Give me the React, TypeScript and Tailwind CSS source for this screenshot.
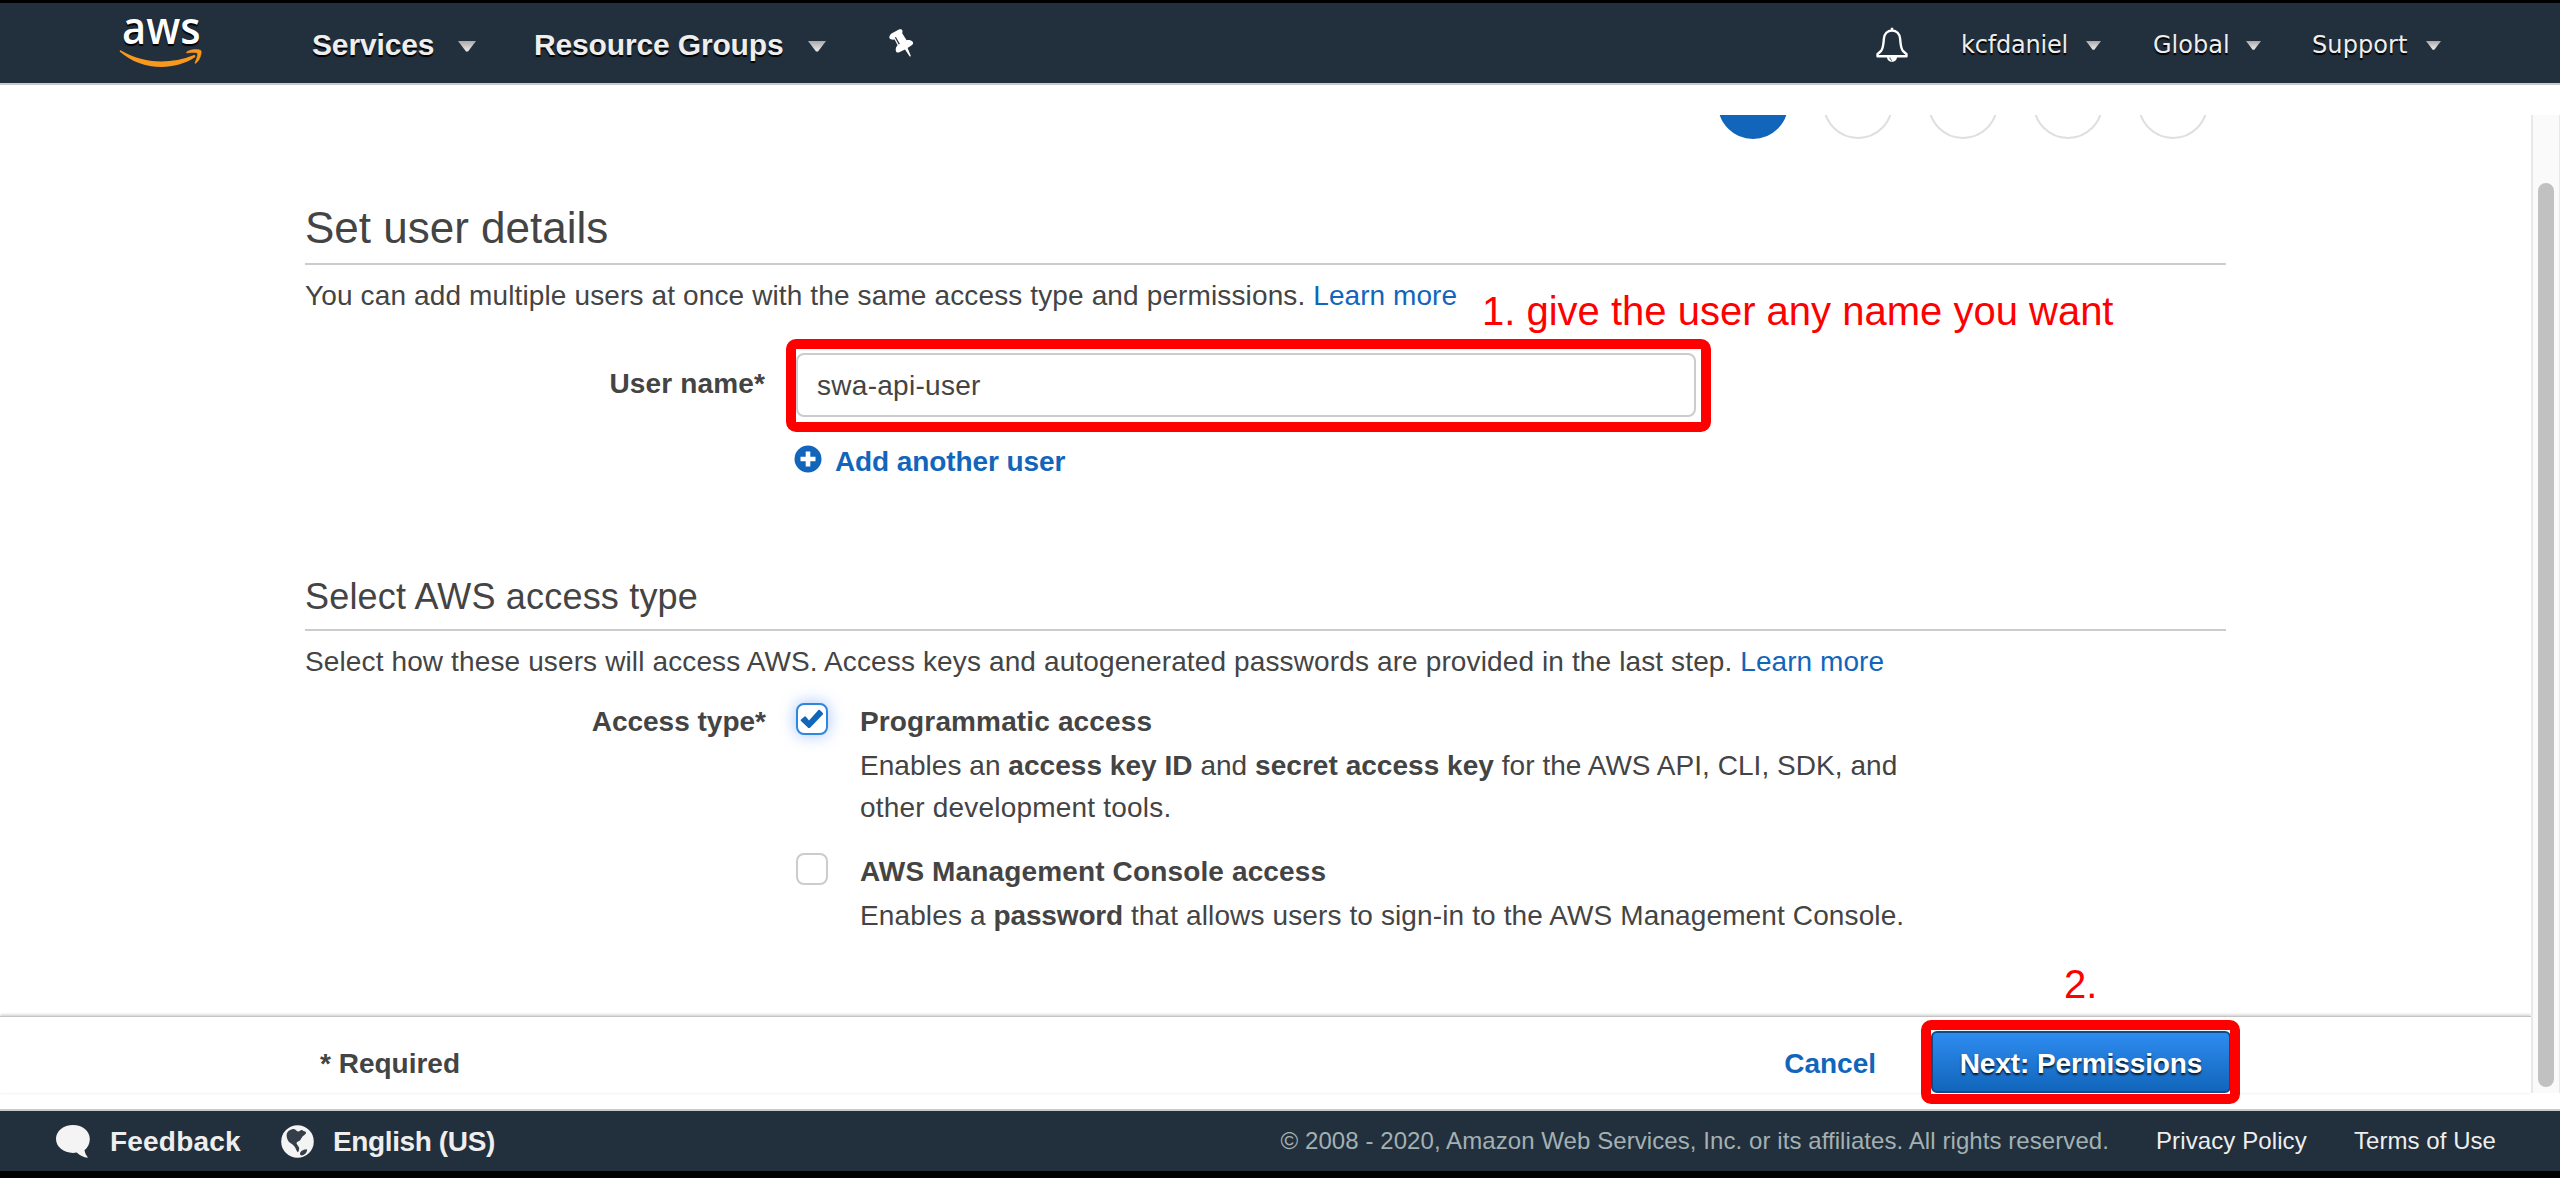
import React from "react";

function Caret({ className, small }: { className: string; small?: boolean }) {
  return (
    <svg
      className={className}
      width={small ? 15 : 18}
      height={small ? 9 : 11}
      viewBox="0 0 18 10"
      preserveAspectRatio="none"
    >
      <defs>
        <linearGradient id="caret" x1="0" y1="0" x2="0" y2="1">
          <stop offset="0" stopColor="#a9a9a9" />
          <stop offset="1" stopColor="#ededed" />
        </linearGradient>
      </defs>
      <path d="M0 0H18L10 9.6H8Z" fill="url(#caret)" />
    </svg>
  );
}

function AwsLogo() {
  return (
    <svg width="90" height="60" viewBox="0 0 90 60" className="ml-[116px] mt-[10px] shrink-0 overflow-visible">
      <text
        x="6"
        y="30.7"
        fill="#fff"
        fontFamily="Open Sans"
        fontWeight="600"
        fontSize="45"
        textLength="78.500"
        lengthAdjust="spacingAndGlyphs"
      >
        aws
      </text>
      <g transform="translate(-0.200 0) scale(1.055 1)" fill="#f8981d">
        <path d="M4.5 37.2C16 44.4 29 48.4 43 48.4C53 48.4 64 46.3 73.6 42.2C75 41.6 76.3 43.2 75 44.2C66.400 50.500 54 53.900 43.300 53.900C28.300 53.900 14.500 48.300 4.200 38.900C3.400 38.100 3.700 36.800 4.500 37.200Z" />
        <path
          d="M77.3 40.300C76.200 38.900 70.300 39.600 67.600 39.900C66.800 40 66.700 39.300 67.400 38.800C72.100 35.500 79.800 36.500 80.700 37.600C81.600 38.700 80.500 46.400 76.100 50.100C75.400 50.700 74.800 50.400 75.100 49.600C76.100 47.200 78.400 41.700 77.300 40.300Z"
          stroke="#f8981d"
          strokeWidth="0.5"
        />
      </g>
    </svg>
  );
}

function Pin() {
  return (
    <svg width="26" height="30" viewBox="0 0 26 30" className="ml-[63px] mt-[25px] shrink-0">
      <path
        d="M0.500 8.300C0 9.500 0.500 10.800 1.800 11.300C3.200 11.900 4.600 11.800 5.600 11.600L8.600 17.300C7 19 6.500 20.800 6.800 22.500C7.100 24.400 8.300 25 9.800 24.400L16 21.400L20.700 28.600H21.600L21.700 27.600L18.600 20L22.700 17.300C24.200 16.200 24.500 14.800 23.600 13.700C22.300 12.200 20 11.700 17.600 12.200L13.200 5.200C13.800 3.900 13.600 2.500 12.700 1.600C11.800 0.900 10.900 1.100 9.900 1.500L2.500 5.500C1.500 6.200 0.900 7.200 0.500 8.300Z"
        fill="#fff"
      />
      <path d="M6.400 9.300L10.300 16.200" stroke="#222f3c" strokeWidth="1.300" />
    </svg>
  );
}

function Bell() {
  return (
    <svg width="32" height="36" viewBox="0 0 32 36" className="mt-[24px] shrink-0">
      <path
        d="M16 0.800V4M16 3.500C11.200 3.500 8.400 7 7.900 11.500C7.300 17.500 7.400 21.200 5 24L1.500 27.200V29.200H30.500V27.200L27 24C24.600 21.200 24.700 17.500 24.100 11.500C23.600 7 20.800 3.500 16 3.500Z"
        fill="none"
        stroke="#fff"
        strokeWidth="2.400"
        strokeLinejoin="round"
      />
      <path d="M11 30H21C21 33 18.800 34.800 16 34.800C13.200 34.800 11 33 11 30Z" fill="#fff" />
      <path d="M14 30.500C14 32 14.800 33 16 33.600" fill="none" stroke="#222f3c" strokeWidth="0.900" />
    </svg>
  );
}

function Header() {
  return (
    <header className="flex h-[82px] shrink-0 border-b-2 border-[#c9cacd] bg-[#222f3c] text-[#eee] [text-shadow:0_2px_1px_#000]">
      <AwsLogo />
      <div className="ml-[106px] w-[146px] shrink-0 whitespace-nowrap text-[30px] font-bold leading-[83px] tracking-[-0.15px]">
        Services
      </div>
      <Caret className="mt-[38px] shrink-0" />
      <div className="ml-[58px] w-[274px] shrink-0 whitespace-nowrap text-[30px] font-bold leading-[83px] tracking-[-0.15px]">
        Resource Groups
      </div>
      <Caret className="mt-[38px] shrink-0" />
      <Pin />
      <div className="ml-auto flex font-['DejaVu_Sans',sans-serif] text-[24px] leading-[84px] tracking-[-0.2px]">
        <Bell />
        <div className="ml-[53px] w-[125px] whitespace-nowrap">kcfdaniel</div>
        <Caret small className="mt-[38px]" />
        <div className="ml-[52px] w-[93px] whitespace-nowrap tracking-[0]">Global</div>
        <Caret small className="mt-[38px]" />
        <div className="ml-[51px] w-[114px] whitespace-nowrap tracking-[0.1px]">Support</div>
        <Caret small className="mr-[119px] mt-[38px]" />
      </div>
    </header>
  );
}

function Steps() {
  return (
    <div className="flex h-[24px] gap-[35px] overflow-hidden pl-[1718px] text-[32px] leading-[66px]">
      <div className="-mt-[46px] h-[70px] w-[70px] shrink-0 rounded-full border-2 border-[#1166bb] bg-[#1166bb] text-center text-white">
        1
      </div>
      {["2", "3", "4", "5"].map((n) => (
        <div
          key={n}
          className="-mt-[46px] h-[70px] w-[70px] shrink-0 rounded-full border-2 border-[#dfdfdf] text-center text-[#999]"
        >
          {n}
        </div>
      ))}
    </div>
  );
}

function Checkbox({ checked }: { checked?: boolean }) {
  return checked ? (
    <div className="mt-[3px] flex h-8 w-8 shrink-0 items-center justify-center rounded-lg border-2 border-[#2e86de] bg-white shadow-[0_0_16px_rgba(46,125,240,0.45)]">
      <svg width="24" height="20" viewBox="0 0 24 20">
        <path
          d="M1 10.600L4.500 7.600C5 7.300 5.500 7.300 6 7.800L9 11.400L18.200 1.200C18.700 0.700 19.300 0.700 19.800 1.100L22.800 3.900C23.200 4.400 23.200 4.900 22.800 5.400L10.300 18.500C9.500 19.300 8.500 19.300 7.800 18.500L1 12C0.500 11.500 0.500 11.100 1 10.600Z"
          fill="#1166bb"
        />
      </svg>
    </div>
  ) : (
    <div className="mt-[3px] h-8 w-8 shrink-0 rounded-lg border-2 border-[#ccc] bg-white" />
  );
}

function Details() {
  return (
    <main className="h-[901px] overflow-hidden">
      <Steps />
      <div className="ml-[305px] w-[1921px]">
        <h1 className="mt-[63px] border-b-2 border-[#ccc] pb-[9px] text-[44px] leading-[52px]">Set user details</h1>
        <p className="mt-[10px] whitespace-nowrap tracking-[0.13px]">
          You can add multiple users at once with the same access type and permissions.{" "}
          <a className="tracking-[0.05px] text-[#1166bb]">Learn more</a>
        </p>
        <div className="mt-[36px] flex">
          <div className="w-[460px] shrink-0 text-right font-bold leading-[61px] tracking-[0.15px]">User name*</div>
          <div className="relative ml-[31px] h-[64px] w-[900px] rounded-lg border-2 border-[#ccc] bg-white pl-[19px] leading-[61px] tracking-[0.28px]">
            swa-api-user
            <div className="pointer-events-none absolute -left-[12px] -top-[16px] h-[93px] w-[925px] rounded-[10px] border-[10px] border-[#f00]" />
          </div>
        </div>
        <div className="mt-[24px] flex pl-[489px] font-bold text-[#1166bb]">
          <svg width="28" height="28" viewBox="0 0 28 28" className="mt-[4px]">
            <circle cx="14" cy="14" r="13.500" fill="#1166bb" />
            <path d="M14 6.500V21.500M6.500 14H21.500" stroke="#fff" strokeWidth="4.600" />
          </svg>
          <span className="ml-[13px] tracking-[-0.1px]">Add another user</span>
        </div>

        <h2 className="mt-[92px] border-b-2 border-[#ccc] pb-[10px] text-[36px] leading-[44px] tracking-[0.19px]">
          Select AWS access type
        </h2>
        <p className="mt-[10px] whitespace-nowrap tracking-[0.125px]">
          Select how these users will access AWS. Access keys and autogenerated passwords are provided in the last
          step. <a className="tracking-[0.05px] text-[#1166bb]">Learn more</a>
        </p>
        <div className="mt-[17px] flex">
          <div className="w-[461px] shrink-0 text-right font-bold leading-[44px]">Access type*</div>
          <div className="ml-[30px] flex flex-col gap-[22px]">
            <div className="flex">
              <Checkbox checked />
              <div className="ml-[32px] whitespace-nowrap pt-px">
                <div className="mb-[2px] font-bold tracking-[0.14px]">Programmatic access</div>
                <div className="tracking-[0.04px]">
                  Enables an <b>access key ID</b> and <b>secret access key</b> for the AWS API, CLI, SDK, and
                  <br />
                  <span className="tracking-[0.2px]">other development tools.</span>
                </div>
              </div>
            </div>
            <div className="-mt-px flex">
              <Checkbox />
              <div className="ml-[32px] whitespace-nowrap pt-px">
                <div className="mb-[2px] font-bold tracking-[0.14px]">AWS Management Console access</div>
                <div className="tracking-[0.12px]">
                  Enables a <b className="tracking-[-0.15px]">password</b> that allows users to sign-in to the AWS
                  Management Console.
                </div>
              </div>
            </div>
          </div>
        </div>
      </div>
    </main>
  );
}

function ActionBar() {
  return (
    <div className="flex h-[77px] border-t border-[#c4c4c4] bg-white font-bold leading-[76px] shadow-[0_-1px_3px_rgba(0,0,0,0.22)]">
      <div className="ml-[320px] mt-[9px]">* Required</div>
      <div className="ml-auto mr-[55px] mt-[9px] text-[#1166bb]">Cancel</div>
      <div className="relative mr-[300px] mt-[14px] h-[62px] w-[300px] rounded-md border-2 border-[#0f4a8a] bg-linear-to-b from-[#2e8cf0] to-[#1166bb] text-center leading-[61px] tracking-[-0.1px] text-white [text-shadow:0_2px_2px_rgba(0,0,0,0.8)]">
        Next: Permissions
        <div className="pointer-events-none absolute -left-[12px] -top-[13px] h-[84px] w-[319px] rounded-[10px] border-[10px] border-[#f00]" />
      </div>
    </div>
  );
}

function Footer() {
  return (
    <footer className="flex h-[62px] shrink-0 border-t-2 border-[#c8cacc] bg-[#222f3c] text-[#eee]">
      <svg width="36" height="36" viewBox="0 0 36 36" className="ml-[55px] mt-[13px]">
        <path
          d="M18 1C27.500 1 34.800 7 34.800 15C34.800 19.500 33 23.500 29.500 26.200C30 29.500 31.500 31.500 33 33.700C28.500 33.300 24.500 31.500 21.800 28.500C20.500 28.800 19.300 28.900 18 28.900C8.500 28.900 1 22.700 1 15C1 7 8.500 1 18 1Z"
          fill="#f4f4f4"
        />
      </svg>
      <div className="ml-[19px] w-[170px] text-[28px] font-bold leading-[62px] tracking-[0.2px]">Feedback</div>
      <svg width="34" height="36" viewBox="0 0 34 36" className="mt-[13px]">
        <circle cx="17.500" cy="17.500" r="16.300" fill="#f4f4f4" />
        <path
          d="M7 9C9 5.800 12.500 4.800 14.500 5.200C16 5.500 16.500 7.500 18.500 7.500C19.800 7.300 20.500 5.500 22 6C23.500 7.500 25 7 26 8.200C26.500 9.800 24 11 22.500 12.500C21.500 14 20.800 15 20 16.500C18.800 17.500 17.200 17.300 16.500 19C16.500 20.500 18.300 21.500 19 23.500C19.500 25.500 18.800 27.500 17.800 28.300C16.500 27 16 25 15 23.200C13.500 20.500 10.500 19.500 8.800 17.800C7 15.500 6 11.500 7 9Z"
          fill="#343f4a"
        />
        <path d="M20 29.500C20.500 26.800 23.500 25.500 27 25.300C27.500 28 25 31 21.500 31.500C20.500 31.400 19.900 30.500 20 29.500Z" fill="#343f4a" />
      </svg>
      <div className="ml-[19px] whitespace-nowrap text-[28px] font-bold leading-[62px] tracking-[-0.38px]">
        English (US)
      </div>
      <div className="ml-auto flex whitespace-nowrap text-[24px] leading-[60px]">
        <div className="mr-[47px] tracking-[0.075px] text-[#a3b1b3]">
          © 2008 - 2020, Amazon Web Services, Inc. or its affiliates. All rights reserved.
        </div>
        <div className="w-[198px] tracking-[0.1px]">Privacy Policy</div>
        <div className="w-[206px] tracking-[0.05px]">Terms of Use</div>
      </div>
    </footer>
  );
}

export default function App() {
  return (
    <div className="relative flex h-[1178px] w-[2560px] flex-col overflow-hidden border-b-[7px] border-t-[3px] border-black bg-white font-['Liberation_Sans',Arial,sans-serif] text-[28px] leading-[42px] text-[#444]">
      <Header />
      <div className="flex flex-1 pb-[16px] pt-[30px]">
        <div className="flex w-[2531px] flex-col">
          <Details />
          <ActionBar />
        </div>
        <div className="w-[29px] border-l-2 border-r border-[#e8e8e8] bg-[#fafafa] pl-[5px] pt-[68px]">
          <div className="h-[904px] w-[16px] rounded-full bg-[#c1c1c1]" />
        </div>
      </div>
      <Footer />
      <div className="absolute left-[1482px] top-[285px] whitespace-nowrap text-[40px] leading-[46px] text-[#f00]">
        1. give the user any name you want
      </div>
      <div className="absolute left-[2064px] top-[958px] text-[40px] leading-[46px] text-[#f00]">2.</div>
    </div>
  );
}
